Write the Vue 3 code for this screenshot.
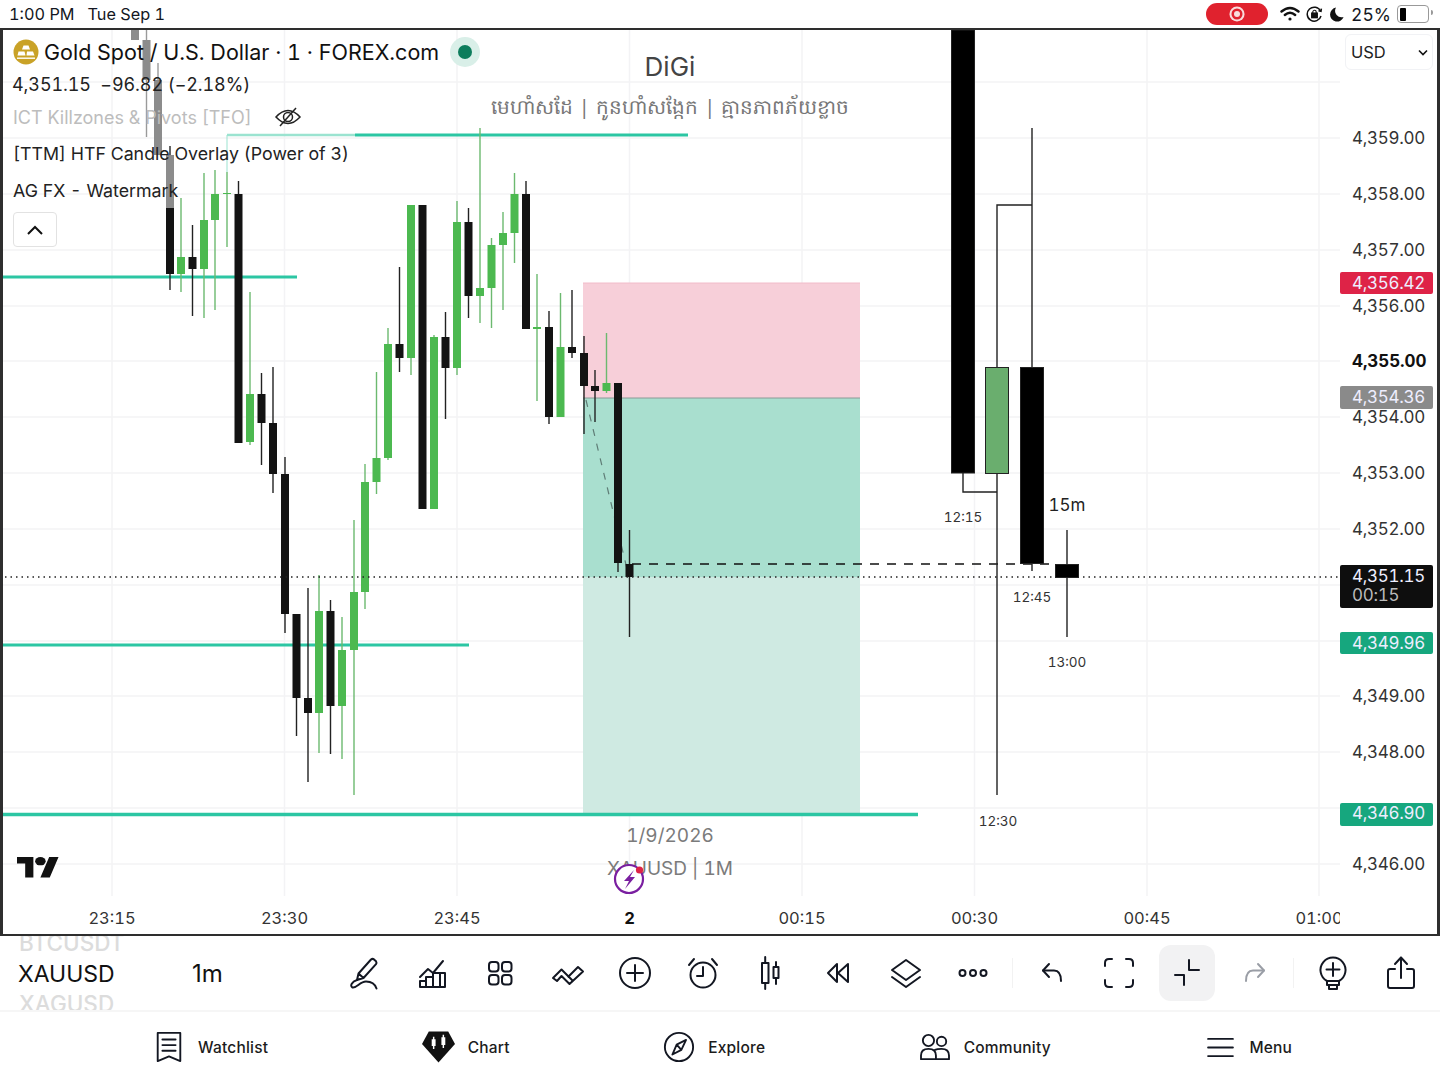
<script setup>
const G = '#4cb950', B = '#131313'
// x, wickTop, wickBottom, bodyTop, bodyBottom, colour
const candles = [
  [135, 30, 40, 30, 40, '#8c8c8c'],
  [146.5, 30, 137, 40, 80, '#8c8c8c'],
  [158, 63, 155, 80, 155, '#8c8c8c'],
  [170, 146, 290, 208, 274, B],
  [181, 198, 292, 257, 274, G],
  [192.5, 225, 316, 257, 269, B],
  [204, 173, 318, 220, 269, G],
  [215, 170, 310, 194, 220, G],
  [227, 172, 247, 193, 194, G],
  [238.5, 181, 443, 194, 443, B],
  [250, 292, 445, 394, 442, G],
  [261.5, 373, 465, 394, 423, B],
  [273, 367, 493, 423, 474, B],
  [285, 457, 633, 474, 614, B],
  [296.5, 614, 736, 614, 698, B],
  [308, 588, 782, 698, 713, B],
  [319, 575, 753, 611, 713, G],
  [330.5, 600, 754, 611, 706, B],
  [342, 617, 759, 650, 706, G],
  [354, 520, 795, 592, 650, G],
  [365, 464, 609, 482, 592, G],
  [376.5, 372, 494, 458, 482, G],
  [388, 328, 460, 344, 458, G],
  [399.5, 267, 372, 344, 358, B],
  [411, 205, 375, 205, 358, G],
  [422.5, 205, 509, 205, 509, B],
  [434, 335, 509, 337, 509, G],
  [445.5, 312, 419, 337, 368, B],
  [457, 201, 375, 222, 368, G],
  [468.5, 208, 318, 222, 296, B],
  [480, 128, 323, 288, 296, G],
  [491.5, 238, 328, 245, 288, G],
  [503, 212, 310, 233, 245, G],
  [514.5, 173, 263, 194, 233, G],
  [526, 181, 329, 194, 329, B],
  [537, 274, 401, 327, 329, G],
  [549, 311, 424, 327, 417, B],
  [560.5, 293, 417, 347, 417, G],
  [572, 290, 358, 347, 353, B],
  [584, 336, 434, 353, 386, B],
  [595, 370, 422, 386, 391, B],
  [606.5, 333, 393, 383, 391, G],
  [618, 383, 572, 383, 563, B],
  [629.5, 530, 637, 564, 577, B],
]
const gridY = [26, 82, 138, 194, 250, 306, 361, 417, 473, 529, 585, 641, 696, 752, 808, 864]
const gridX = [112, 284.5, 457, 629.5, 802, 974.5, 1147, 1319]
const prices = [
  ['4,359.00', 138], ['4,358.00', 194], ['4,357.00', 250], ['4,356.00', 306],
  ['4,354.00', 417], ['4,353.00', 473], ['4,352.00', 529], ['4,349.00', 696],
  ['4,348.00', 752], ['4,346.00', 864],
]
const tags = [
  ['4,356.42', 272, 22, '#de2347', 283],
  ['4,354.36', 386, 23, '#8a8a8a', 397],
  ['4,349.96', 632, 22, '#16a77e', 643],
  ['4,346.90', 803, 23, '#16a77e', 813],
]
const times = [['23:15', 112], ['23:30', 284.5], ['23:45', 457], ['2', 629.5], ['00:15', 802], ['00:30', 974.5], ['00:45', 1147], ['01:00', 1319]]
const htfLabels = [['12:15', 963, 522], ['12:30', 998, 826], ['12:45', 1032, 602], ['13:00', 1067, 667]]
const navLabels = ['Watchlist', 'Chart', 'Explore', 'Community', 'Menu']
</script>

<template>
  <div class="page">
    <header class="status">
      <div class="status-left">
        <span class="clock">1:00 PM</span>
        <span>Tue Sep 1</span>
      </div>
      <div class="status-right">
        <span class="rec"><span class="rec-dot"></span></span>
        <svg width="20" height="16" viewBox="0 0 20 16" fill="none" stroke="#111" stroke-width="2.4" stroke-linecap="round">
          <path d="M1.5 5.5Q10 -1.5 18.5 5.5" /><path d="M4.8 9Q10 4.5 15.2 9" /><circle cx="10" cy="13" r="1.6" fill="#111" stroke="none" />
        </svg>
        <svg class="lock" width="17" height="17" viewBox="0 0 17 17" fill="none" stroke="#111" stroke-width="1.5">
          <path d="M14.5 5A7 7 0 1 0 15 10" /><path d="M12.5 4.8 15 5.4 15.4 2.6" /><rect x="5.8" y="7.2" width="5.4" height="4.4" fill="#111" /><path d="M6.8 7V6a1.7 1.7 0 0 1 3.4 0v1" stroke-width="1.1" />
        </svg>
        <svg class="moon" width="14" height="15" viewBox="0 0 14 15"><path d="M6 0.6A7 7 0 1 0 13.6 10 6.5 6.5 0 0 1 6 0.6Z" fill="#111" /></svg>
        <span class="pct">25%</span>
        <span class="battery"><span class="battery-fill"></span></span>
      </div>
    </header>

    <main class="chart">
      <svg class="canvas" viewBox="3 30 1434 904" width="1434" height="904">
        <defs>
          <clipPath id="plot"><rect x="3" y="30" width="1337" height="904" /></clipPath>
        </defs>
        <g clip-path="url(#plot)">
          <g stroke="#f3f3f5" stroke-width="1.5">
            <line v-for="y in gridY" :key="'h' + y" x1="3" x2="1340" :y1="y" :y2="y" />
            <line v-for="x in gridX" :key="'v' + x" :x1="x" :x2="x" y1="30" y2="896" />
          </g>

          <rect x="583" y="283" width="277" height="115" fill="#f7cfd9" />
          <rect x="583" y="398" width="277" height="179" fill="#a9dfcf" />
          <rect x="583" y="577" width="277" height="237" fill="#cfeae2" />
          <line x1="583" x2="860" y1="398" y2="398" stroke="#8a9a96" stroke-width="1" />
          <line x1="586" y1="400" x2="629" y2="577" stroke="#5f7d76" stroke-width="1.2" stroke-dasharray="7 8" />
          <line x1="583" x2="860" y1="283" y2="283" stroke="#f2bcca" stroke-width="1" />

          <g stroke="#2cc6a3">
            <line x1="3" x2="297" y1="277" y2="277" stroke-width="3" />
            <line x1="3" x2="469" y1="645" y2="645" stroke-width="3" />
            <line x1="3" x2="918" y1="814.5" y2="814.5" stroke-width="3.5" />
            <line x1="227" x2="355" y1="135" y2="135" stroke-width="2.5" stroke="#9be3d0" />
            <line x1="355" x2="688" y1="135" y2="135" stroke-width="3" />
            <line x1="227" x2="227" y1="135" y2="172" stroke-width="1" stroke="#9be3d0" />
          </g>

          <g v-for="c in candles" :key="c[0]">
            <line :x1="c[0]" :x2="c[0]" :y1="c[1]" :y2="c[2]" :stroke="c[5] === '#131313' ? '#222' : (c[5] === '#8c8c8c' ? '#9a9a9a' : '#6cb96f')" stroke-width="1.4" />
            <rect :x="c[0] - 4" :y="c[3]" width="8" :height="c[4] - c[3]" :fill="c[5]" />
          </g>
          <rect x="166" y="155" width="8" height="53" fill="#8c8c8c" />

          <line x1="632" x2="1055" y1="564" y2="564" stroke="#111" stroke-width="1.4" stroke-dasharray="9 8" />
          <line x1="5" x2="1340" y1="577" y2="577" stroke="#222" stroke-width="1.3" stroke-dasharray="1.5 4" />

          <g stroke="#222" stroke-width="1.4" fill="none">
            <path d="M963 473V492H997" />
            <path d="M997 795V205H1032" />
            <path d="M1032 128V571" />
            <path d="M1067 530V637" />
          </g>
          <rect x="951.5" y="30" width="23" height="443" fill="#000" stroke="#222" />
          <rect x="985.5" y="367.5" width="23" height="106" fill="#6aae6e" stroke="#222" />
          <rect x="1020.5" y="367.5" width="23" height="196" fill="#000" stroke="#222" />
          <rect x="1055.5" y="564.5" width="23" height="13" fill="#000" stroke="#222" />
          <text v-for="l in htfLabels" :key="l[0]" :x="l[1]" :y="l[2]" class="t-small" text-anchor="middle">{{ l[0] }}</text>
          <text x="1067" y="511" class="t-15m" text-anchor="middle">15m</text>

          <text x="670" y="76" class="wm-title" text-anchor="middle">DiGi</text>
          <text x="670" y="114" class="wm-sub" text-anchor="middle">មេហាំសដែ  |  កូនហាំសង្កែក  |  គ្មានភាពភ័យខ្លាច</text>
          <text x="670" y="842" class="wm-line" text-anchor="middle">1/9/2026</text>
          <text x="670" y="875" class="wm-line" text-anchor="middle">XAUUSD | 1M</text>

          <text v-for="t in times" :key="t[0]" :x="t[1]" y="924" text-anchor="middle" :class="t[0] === '2' ? 't-time bold' : 't-time'">{{ t[0] }}</text>

          <g transform="translate(17 857) scale(1.17 .93)" fill="#111">
            <path d="M14 22H7V7H0V0h14zM28 22h-8l7.5-22h8z" />
            <circle cx="20" cy="4.5" r="4.5" />
          </g>

          <circle cx="629" cy="879" r="14" fill="#fff" stroke="#7a1fa0" stroke-width="2.2" />
          <path d="M634 870 624 881H629L625 889 635 877H630Z" fill="#7a1fa0" />
          <circle cx="639.5" cy="870" r="3.6" fill="#de2347" />
        </g>

        <text v-for="p in prices" :key="p[0]" x="1352" :y="p[1] + 6" class="t-price">{{ p[0] }}</text>
        <text x="1352" y="367" class="t-price bold">4,355.00</text>
        <g v-for="t in tags" :key="t[0]">
          <rect x="1340" :y="t[1]" width="93" :height="t[2]" rx="2" :fill="t[3]" />
          <text x="1352" :y="t[4] + 6" class="t-price on-dark">{{ t[0] }}</text>
        </g>
        <rect x="1340" y="565" width="93" height="43" rx="2" fill="#0e0e0e" />
        <text x="1352" y="582" class="t-price on-dark">4,351.15</text>
        <text x="1352" y="601" class="t-price on-dim">00:15</text>
      </svg>

      <div class="legend">
        <div class="legend-title">
          <svg class="gold" width="26" height="26" viewBox="0 0 26 26">
            <circle cx="13" cy="13" r="12.5" fill="#c9a227" />
            <path d="M10.5 6.5h5l1.5 4h-8zM5.5 12.5h6l1 4H4.5zM14 12.5h6l1.5 4h-8z" fill="#fff" />
            <path d="M4 18.5h18v1.4H4z" fill="#fff" />
          </svg>
          <span>Gold Spot / U.S. Dollar · 1 · FOREX.com</span>
          <span class="live"><span class="live-dot"></span></span>
        </div>
        <div class="legend-price">4,351.15&nbsp; −96.82 (−2.18%)</div>
        <div class="legend-row muted">
          <span>ICT Killzones &amp; Pivots [TFO]</span>
          <svg width="28" height="24" viewBox="0 0 28 24" fill="none" stroke="#222" stroke-width="1.5">
            <path d="M2 12Q14 -1 26 12Q14 25 2 12Z" /><circle cx="14" cy="12" r="4.5" /><path d="M6 21 22 3" />
          </svg>
        </div>
        <div class="legend-row">[TTM] HTF Candle Overlay (Power of 3)</div>
        <div class="legend-row">AG FX - Watermark</div>
        <button class="collapse">
          <svg width="18" height="12" viewBox="0 0 18 12" fill="none" stroke="#111" stroke-width="2"><path d="M2 10 9 3l7 7" /></svg>
        </button>
      </div>

      <div class="currency">
        <span>USD</span>
        <svg width="10" height="7" viewBox="0 0 10 7" fill="none" stroke="#111" stroke-width="1.6"><path d="M1 1.5 5 5.5l4-4" /></svg>
      </div>
    </main>

    <section class="toolbar">
      <div class="picker">
        <span class="ghost top">BTCUSDT</span>
        <span class="symbol">XAUUSD</span>
        <span class="ghost bottom">XAGUSD</span>
      </div>
      <span class="interval">1m</span>
      <div class="tools">
        <button class="tool"><svg class="ic" viewBox="0 0 34 34"><path d="M9 24 10.5 17.5 23 3.5Q24.5 2.3 26 3.4L28 5.2Q29 6.8 28 8.2L15.5 22ZM10.5 17.5 15.5 22" /><path d="M9 24C4 25.500 1.500 30 4.500 31.500 8.500 32.500 12 25.500 18 25.500 23 25.500 27 28 28.500 32.500" /></svg></button>
        <button class="tool"><svg class="ic" viewBox="0 0 34 34"><path d="M5 21 13 13 18 17 28 5" /><path d="M5 31V25H11V31M11 31V21H18V31M18 31V17H25V31M25 31V17H30V31ZM5 31H30" /></svg></button>
        <button class="tool"><svg class="ic" viewBox="0 0 34 34"><rect x="6" y="6" width="9.500" height="9.500" rx="3" /><rect x="19" y="6" width="9.500" height="9.500" rx="3" /><rect x="6" y="19" width="9.500" height="9.500" rx="3" /><rect x="19" y="19" width="9.500" height="9.500" rx="3" /></svg></button>
        <button class="tool"><svg class="ic" viewBox="0 0 34 34"><path d="M2 22 10.500 13.500 17.500 20.500 27 11 32 15.500 18.500 28 10.500 20 6 25Z" /><path d="M17.500 20.500 21.500 24.500" /></svg></button>
        <button class="tool"><svg class="ic" viewBox="0 0 34 34"><circle cx="17" cy="17" r="15" /><path d="M17 9V25M9 17H25" /></svg></button>
        <button class="tool"><svg class="ic" viewBox="0 0 34 34"><circle cx="17" cy="19" r="12.500" /><path d="M17 11V20H11" /><path d="M3 9 8 3M31 9 26 3" /></svg></button>
        <button class="tool"><svg class="ic" viewBox="0 0 34 34"><rect x="9" y="7" width="6.500" height="20" /><path d="M12.200 1V7M12.200 27V33" /><rect x="20.500" y="11" width="5" height="11" /><path d="M23 6V11M23 22V28" /></svg></button>
        <button class="tool"><svg class="ic" viewBox="0 0 34 34"><path d="M16 8 7 17 16 26M16 8V26" /><path d="M27 8 17 17 27 26Z" /></svg></button>
        <button class="tool"><svg class="ic" viewBox="0 0 34 34"><path d="M17 4 31 14 17 24 3 14Z" /><path d="M3 21 17 31 31 21" /></svg></button>
        <button class="tool"><svg class="ic" viewBox="0 0 34 34"><circle cx="6.500" cy="17" r="3" /><circle cx="17" cy="17" r="3" /><circle cx="27.500" cy="17" r="3" /></svg></button>
        <span class="divider"></span>
        <button class="tool"><svg class="ic" viewBox="0 0 34 34"><path d="M14 8 8 14.500 14 21" /><path d="M8 14.500H19Q26 14.500 26 25" /></svg></button>
        <button class="tool"><svg class="ic" viewBox="0 0 34 34"><path d="M10 3H7Q3 3 3 7V10M24 3H27Q31 3 31 7V10M3 24V27Q3 31 7 31H10M31 24V27Q31 31 27 31H24" /></svg></button>
        <button class="tool on"><svg class="ic" viewBox="0 0 34 34"><path d="M19 4V14H29M5 19H14V29" /></svg></button>
        <button class="tool"><svg class="ic soft" viewBox="0 0 34 34"><path d="M20 8 26 14.500 20 21" /><path d="M26 14.500H15Q8 14.500 8 25" /></svg></button>
        <span class="divider"></span>
        <button class="tool"><svg class="ic" viewBox="0 0 34 34"><path d="M11 25A12.500 12.500 0 1 1 23 25V29H11Z" /><path d="M11 25H23M17 7V20M10.500 13.500H23.500" /><rect x="13" y="29" width="8" height="4" /></svg></button>
        <button class="tool"><svg class="ic" viewBox="0 0 34 34"><path d="M17 1.500V22M11 8 17 1.500 23 8" /><path d="M11 13H6Q4 13 4 15V30Q4 32 6 32H28Q30 32 30 30V15Q30 13 28 13H23" /></svg></button>
      </div>
    </section>

    <nav class="nav">
      <div class="nav-item">
        <svg class="ic nav-ic" viewBox="0 0 28 34"><path d="M2 2H26V32L14 27 2 32Z" /><path d="M7 9H21M7 15H21M7 21H21" /></svg>
        <span>{{ navLabels[0] }}</span>
      </div>
      <div class="nav-item">
        <svg class="nav-fill" width="33" height="32" viewBox="0 0 34 32"><path d="M7 0H27L34 13 17 32 0 13Z" fill="#111" /><path d="M10 8H14V15H10ZM20 6H24V14H20Z" fill="#fff" /><path d="M12 5.500V18M22 3.500V17" stroke="#fff" stroke-width="1.500" /></svg>
        <span>{{ navLabels[1] }}</span>
      </div>
      <div class="nav-item">
        <svg class="ic nav-ic" viewBox="0 0 34 34"><circle cx="17" cy="17" r="15" /><path d="M24.500 9.500 19.500 20 10 25 14.500 14.500ZM14.500 14.500 19.500 20" /></svg>
        <span>{{ navLabels[2] }}</span>
      </div>
      <div class="nav-item">
        <svg class="ic nav-ic wide" viewBox="0 0 34 30"><circle cx="10" cy="8" r="6" /><circle cx="24" cy="9" r="5" /><path d="M2 28V24Q2 17 10 17 18 17 18 24V28Z" /><path d="M17 18Q19 17 24 17 32 17 32 24V28H18" /></svg>
        <span>{{ navLabels[3] }}</span>
      </div>
      <div class="nav-item menu-item">
        <svg class="ic nav-menu" viewBox="0 0 28 22"><path d="M1 2H27M1 11H27M1 20H27" /></svg>
        <span>{{ navLabels[4] }}</span>
      </div>
    </nav>
  </div>
</template>

<style>
html, body { margin: 0; background: #fff; }
</style>

<style scoped>
.page {
  width: 1440px;
  height: 1080px;
  overflow: hidden;
  display: flex;
  flex-direction: column;
  font-family: Inter, "Liberation Sans", "Noto Sans", sans-serif;
  font-variant-numeric: tabular-nums;
  color: #131722;
  background: #fff;
}
.status {
  height: 28px;
  display: flex;
  justify-content: space-between;
  align-items: center;
  padding: 0 8px 0 9px;
  font-size: 16.3px;
  flex: none;
}
.status-left { display: flex; gap: 13px; }
.status-right { display: flex; align-items: center; }
.rec {
  width: 62px;
  height: 22px;
  border-radius: 11px;
  background: #e0222e;
  display: flex;
  align-items: center;
  justify-content: center;
  margin-right: 12px;
}
.rec-dot {
  width: 6px;
  height: 6px;
  border-radius: 50%;
  background: #f9dcdc;
  box-shadow: 0 0 0 2.5px #e0222e, 0 0 0 4.5px #f9dcdc;
}
.lock { margin-left: 6px; }
.moon { margin-left: 7px; }
.pct { margin-left: 7px; font-size: 17.500px; }
.battery {
  width: 27px;
  height: 13px;
  margin: 0 3px 0 6px;
  border: 1.5px solid #999;
  border-radius: 4px;
  padding: 1.5px;
  display: flex;
  position: relative;
}
.battery::after {
  content: "";
  position: absolute;
  right: -4.5px;
  top: 4px;
  width: 2px;
  height: 5px;
  background: #999;
  border-radius: 0 2px 2px 0;
}
.battery-fill { width: 6px; background: #000; border-radius: 1px; }
.chart {
  position: relative;
  height: 908px;
  flex: none;
  box-sizing: border-box;
  border: 3px solid #2e2e2e;
  border-width: 2.5px 3px;
  overflow: hidden;
}
.canvas { position: absolute; left: 0; top: 0; display: block; }
.t-small { font-size: 13.500px; fill: #333; }
.t-15m { font-size: 17px; fill: #222; }
.t-time { font-size: 16.5px; fill: #333; }
.t-time.bold { font-weight: 700; fill: #111; }
.t-price { font-size: 17px; fill: #333; letter-spacing: -.3px; }
.t-price.bold { font-weight: 700; fill: #111; letter-spacing: -.1px; }
.on-dark { fill: #eef; }
.on-dim { fill: #bbb; }
.wm-title { font-size: 26px; fill: #444; }
.wm-sub { font-family: "Noto Sans", sans-serif; font-size: 20px; fill: #777; word-spacing: 1px; white-space: pre; }
.wm-line { font-size: 19px; fill: #7b7b7b; }
.legend {
  position: absolute;
  left: 10px;
  top: 8px;
  display: flex;
  flex-direction: column;
  align-items: flex-start;
}
.legend-title {
  display: flex;
  align-items: center;
  gap: 5px;
  height: 27px;
  font-size: 21.5px;
  color: #111;
  white-space: nowrap;
}
.gold { flex: none; }
.live {
  width: 30px;
  height: 30px;
  border-radius: 50%;
  background: #d9efe8;
  display: flex;
  align-items: center;
  justify-content: center;
  margin-left: 6px;
}
.live-dot { width: 14px; height: 14px; border-radius: 50%; background: #0d7d5c; }
.legend-price {
  margin: 6px 0 0 -1px;
  height: 28px;
  font-size: 18px;
  line-height: 28px;
  letter-spacing: -.1px;
  color: #222;
  white-space: nowrap;
}
.legend-row {
  height: 36.500px;
  display: flex;
  align-items: center;
  gap: 22px;
  font-size: 17.800px;
  color: #222;
  white-space: nowrap;
}
.legend-row.muted { color: #bdbdbd; font-size: 18px; }
.collapse {
  margin-top: 3.500px;
  width: 44px;
  height: 35px;
  border: 1.5px solid #e2e2e2;
  border-radius: 4px;
  background: #fff;
  display: flex;
  align-items: center;
  justify-content: center;
  padding: 0;
}
.currency {
  position: absolute;
  right: 4px;
  top: 4px;
  width: 88px;
  height: 36px;
  box-sizing: border-box;
  border: 1.500px solid #f1f2f5;
  border-radius: 6px;
  background: #fff;
  padding: 0 4px 0 5px;
  display: flex;
  align-items: center;
  justify-content: space-between;
  font-size: 16.5px;
  color: #222;
}
.toolbar {
  height: 74px;
  flex: none;
  display: flex;
  align-items: center;
}
.picker {
  width: 192px;
  height: 74px;
  padding-left: 18px;
  box-sizing: border-box;
  display: flex;
  flex-direction: column;
  justify-content: center;
  overflow: hidden;
  flex: none;
}
.symbol { font-size: 23px; line-height: 32px; height: 32px; flex: none; color: #111; }
.ghost { font-size: 22.5px; line-height: 22px; color: #dcdcdc; font-weight: 500; height: 22px; flex: none; padding-left: 1px; }
.ghost.top { margin-bottom: 4px; }
.ghost.bottom { margin-top: 3px; }
.interval { font-size: 24px; font-variant-numeric: normal; width: 139px; flex: none; color: #111; }
.tools { display: flex; align-items: center; }
.tool {
  width: 67.600px;
  height: 56px;
  flex: none;
  padding: 0;
  border: 0;
  background: transparent;
  display: flex;
  align-items: center;
  justify-content: center;
  border-radius: 12px;
}
.tool.on { background: #f2f2f3; width: 56px; margin: 0 5.800px; }
.divider { width: 1px; height: 30px; background: #f2f2f2; margin: 0 5px; flex: none; }
.ic {
  width: 34px;
  height: 34px;
  fill: none;
  stroke: #131722;
  stroke-width: 2;
  stroke-linejoin: round;
  stroke-linecap: round;
  flex: none;
}
.ic.soft { stroke: #9a9ea6; }
.nav {
  flex: 1;
  display: flex;
  align-items: center;
  gap: 153.500px;
  padding: 2px 0 0 153px;
  border-top: 2px solid #f6f6f6;
  font-size: 15.5px;
  font-weight: 500;
  color: #1c1c1c;
}
.nav-item { display: flex; align-items: center; gap: 13px; white-space: nowrap; letter-spacing: .2px; }
.nav-ic { width: 32px; height: 32px; }
.nav-ic.wide { width: 32px; height: 28px; }
.nav-menu { width: 27px; height: 21px; margin-right: 2px; }
.menu-item { margin-left: 3px; }
.nav-fill { flex: none; }
</style>
